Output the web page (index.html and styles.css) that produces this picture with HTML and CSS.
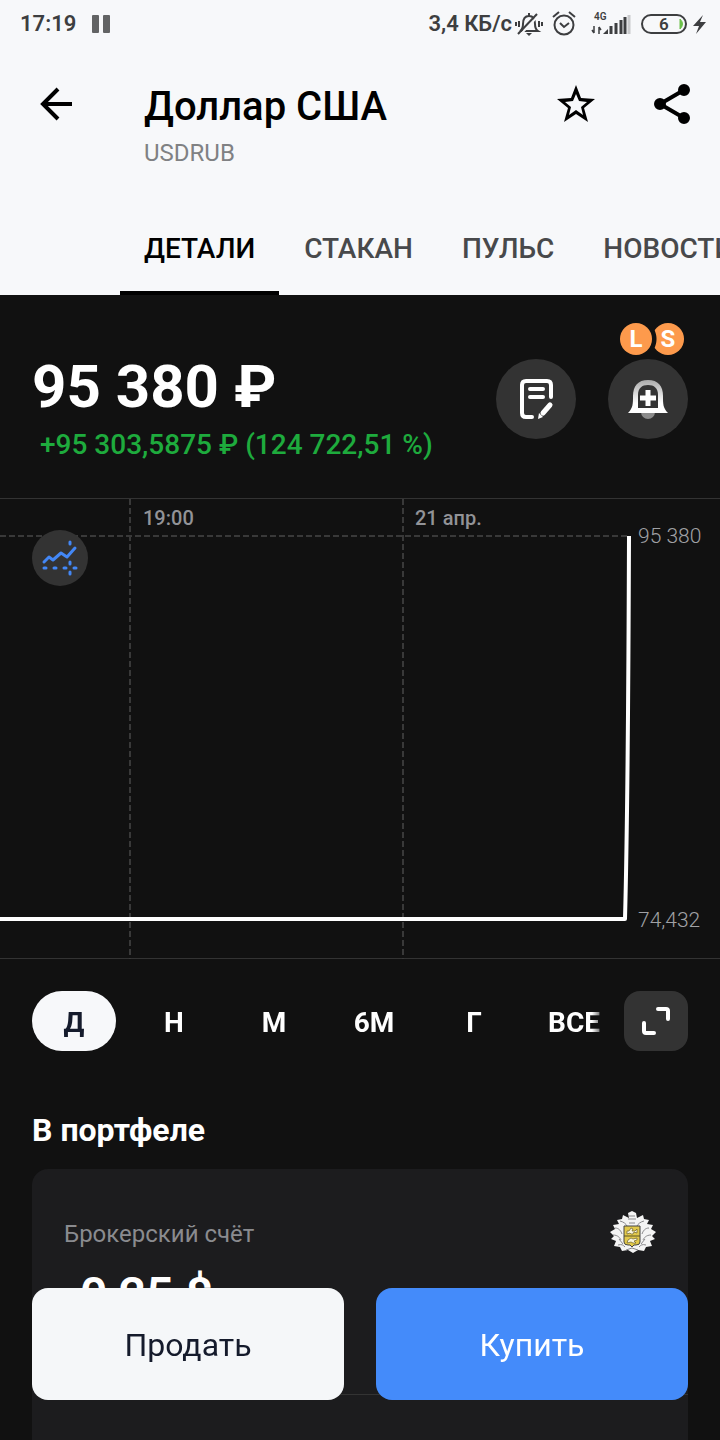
FILE: index.html
```html
<!DOCTYPE html>
<html lang="ru">
  <head>
    <meta charset="UTF-8" />
    <meta name="viewport" content="width=device-width, initial-scale=1.0" />
    <title>Доллар США</title>
    <link rel="stylesheet" href="styles.css">
  </head>
  <body>
    <header class="header">
      <div class="status">
        <span>17:19</span>
        <svg class="pause" width="18" height="18" viewBox="0 0 18 18" fill="#626364">
          <rect width="7" height="18" rx="1" />
          <rect x="11" width="7" height="18" rx="1" />
        </svg>
        <span class="speed">3,4 КБ/с</span>
        <svg class="status-icons" width="192" height="32" viewBox="0 0 192 32" fill="none" stroke="#3d3e40" stroke-width="2">
          <!-- muted bell -->
          <path d="M6 23h18c-3-2-3-4-3-7 0-5-2-8-6-8s-6 3-6 8c0 3 0 5-3 7M15 5v3M5 13v6M2 14v4M25 13v6M28 14v4" />
          <path d="M12 25h6l-3 3z" fill="#3d3e40" stroke="none" />
          <path d="M6 27 25 7" stroke="#f7f8fa" />
          <path d="M4 26 23 6" />
          <!-- alarm -->
          <circle cx="50" cy="17" r="9.5" />
          <path d="m46 15 4 4 5-4M39 9l6-5M61 9l-6-5" />
          <!-- network -->
          <text class="net" x="80" y="12">4G</text>
          <path d="M80 18v7m-2-3 2 3M85 26v-7m2 3-2-3" stroke-width="1.5" />
          <path d="M89 26h5v-5z" fill="#3d3e40" stroke="none" />
          <path d="M97 26v-8M102 26V15M107 26V12M111 26V9" stroke-width="3" />
          <path d="M115 26V7" stroke="#c9cacc" stroke-width="3" />
          <!-- battery -->
          <rect x="128" y="7" width="44" height="18" rx="9" />
          <path d="M166 11q5 5 0 10z" fill="#6cc04a" stroke="#6cc04a" stroke-width="1" />
          <text class="charge" x="145" y="22">6</text>
          <path d="m189 7-10 11h6l-3 8 10-12h-6l3-7z" fill="#3d3e40" stroke="none" />
        </svg>
      </div>
      <div class="toolbar">
        <button class="icon-btn" aria-label="Назад">
          <svg width="36" height="36" viewBox="0 0 36 36" fill="none" stroke="#000" stroke-width="4">
            <path d="M34 18H5M20 3 5 18l15 15" />
          </svg>
        </button>
        <div class="heading">
          <h1 class="title">Доллар США</h1>
          <div class="ticker">USDRUB</div>
        </div>
        <button class="icon-btn" aria-label="В избранное">
          <svg width="40" height="40" viewBox="0 0 40 40" fill="#000" fill-rule="evenodd">
            <path d="m20 1 5 13 14 1-11 9 4 14-12-8-12 8 4-14L1 15l14-1zM20 10l-3 7-8 1 6 5-2 8 7-5 7 5-2-8 6-5-8-1z" />
          </svg>
        </button>
        <button class="icon-btn share" aria-label="Поделиться">
          <svg width="40" height="40" viewBox="0 0 40 40" stroke="#000" stroke-width="4">
            <path d="M32 6 8 20l24 14" fill="none" />
            <circle cx="32" cy="6" r="4" />
            <circle cx="8" cy="20" r="4" />
            <circle cx="32" cy="34" r="4" />
          </svg>
        </button>
      </div>
      <nav class="tabs">
        <button class="tab active">ДЕТАЛИ</button>
        <button class="tab">СТАКАН</button>
        <button class="tab">ПУЛЬС</button>
        <button class="tab">НОВОСТИ</button>
      </nav>
    </header>

    <main class="main">
      <section class="summary">
        <div class="quote">
          <div class="price">95 380 ₽</div>
          <div class="change">+95 303,5875 ₽ (124 722,51 %)</div>
        </div>
        <button class="round-btn" aria-label="Заявка">
          <svg width="40" height="44" viewBox="0 0 40 44" fill="none" stroke="#fff" stroke-width="4" stroke-linecap="round">
            <path d="M16 40h-6q-4 0-4-4V8q0-4 4-4h21q4 0 4 4v12M14 12h13M14 20h13" />
            <path d="m27 36 7-8" stroke-width="5" />
            <path d="m23 36 4 4-5 2z" fill="#fff" stroke="none" />
          </svg>
        </button>
        <div class="alert">
          <button class="round-btn" aria-label="Уведомление">
            <svg width="40" height="44" viewBox="0 0 40 44">
              <defs>
                <linearGradient id="bell" x2="0" y2="1">
                  <stop stop-color="#aaa" />
                  <stop offset="0.7" stop-color="#fff" />
                </linearGradient>
              </defs>
              <path d="M13 35h14a7 7 0 0 1-14 0" fill="#8c8c8c" />
              <path d="M0 36c5-5 5-9 5-17C5 9 10 3 20 3s15 6 15 16c0 8 0 12 5 17z" fill="url(#bell)" />
              <path d="M10 31V18c0-7 4-10 10-10s10 3 10 10v13z" fill="#333" />
              <path d="M20 13v16M12 21h16" stroke="#fff" stroke-width="5" />
            </svg>
          </button>
          <div class="badges">
            <span class="badge">L</span>
            <span class="badge short">S</span>
          </div>
        </div>
      </section>

      <section class="chart">
        <svg class="plot" viewBox="0 0 720 460">
          <g class="grid">
            <path d="M0 37h628M130 0v460M403 0v460" />
          </g>
          <text class="time" x="143" y="26">19:00</text>
          <text class="time" x="415" y="26">21 апр.</text>
          <text class="value" x="638" y="44">95 380</text>
          <text class="value" x="638" y="428">74,432</text>
          <path class="line" d="M0 420h625q3-110 4-383" />
        </svg>
        <button class="chart-btn" aria-label="Тип графика">
          <svg width="40" height="40" viewBox="0 0 40 40" fill="none" stroke="#4387f5" stroke-width="3" stroke-linecap="round" stroke-linejoin="round">
            <path d="m4 24 5-5 4 3 8-7 6 4 8-9" />
            <path d="M4 30h2M14 30h2M24 30h2M34 30h2M30 24v2M30 34v2M30 4v2" />
          </svg>
        </button>
      </section>

      <section class="periods">
        <div class="period-list">
          <button class="period active">Д</button>
          <button class="period">Н</button>
          <button class="period">М</button>
          <button class="period">6М</button>
          <button class="period">Г</button>
          <button class="period">ВСЕ</button>
        </div>
        <button class="expand" aria-label="На весь экран">
          <svg width="32" height="32" viewBox="0 0 32 32" fill="none" stroke="#fff" stroke-width="4" stroke-linecap="round">
            <path d="M18 4h8q2 0 2 2v8M4 18v8q0 2 2 2h8" />
          </svg>
        </button>
      </section>

      <h2 class="section-title">В портфеле</h2>
      <section class="card">
        <div class="account">
          <div>
            <div class="account-name">Брокерский счёт</div>
            <div class="amount">0,25 $</div>
          </div>
          <svg class="crest" width="48" height="48" viewBox="0 0 48 48">
            <path d="M20 4 24 2l4 2 1 5 6-3 1 4 5 1-2 4 6 1-2 4 5 3-4 4 3 3-5 2 2 5-6 1-2 4-6-1-5 3-5-3-6 1-2-4-6-1 2-5-5-2 3-3-4-4 5-3-2-4 6-1-2-4 5-1 1-4 6 3z" fill="#f4f4f4" />
            <path d="M12 12c4 1 6 3 7 5M36 12c-4 1-6 3-7 5M7 19c4 0 6 3 7 6M41 19c-4 0-6 3-7 6M5 26c5 0 7 3 8 5M43 26c-5 0-7 3-8 5M10 36c4-1 5 0 7 2M38 36c-4-1-5 0-7 2M21 7h6M20 10h8M21 14h6M18 41l6-2 6 2M11 30l4 5M37 30l-4 5" fill="none" stroke="#88888b" />
            <path d="M16 17h16v16q0 3-4 3h-2l-2 2-2-2h-2q-4 0-4-3z" fill="#e2c94b" stroke="#444" />
            <path d="M16 27h16" stroke="#5b5225" />
            <path d="M19 25v-3h2l2-3 2 1-1 2h3l2-2v4l-3-1-1 2h-2l-1-1zM19 34l1-3 3-2 2 1 4-1v2l-3 1 2 2h-3l-2-1z" fill="#faf6dd" stroke="#6b602b" stroke-width="0.7" />
          </svg>
        </div>
        <div class="divider"></div>
      </section>
    </main>

    <div class="actions">
      <button class="action sell">Продать</button>
      <button class="action buy">Купить</button>
    </div>
  </body>
</html>
```
FILE: styles.css
```css
* {
  box-sizing: border-box;
}

html,
body {
  height: 100%;
  margin: 0;
}

body {
  display: flex;
  flex-direction: column;
  overflow: hidden;
  font-family: Roboto, "Noto Sans", sans-serif;
  color: #fff;
  background-color: #111;
}

button {
  padding: 0;
  border: none;
  font: inherit;
  color: inherit;
  background-color: transparent;
  cursor: pointer;
}

svg {
  display: block;
}

.header {
  flex: none;
  color: #000;
  background-color: #f7f8fa;
}

.status {
  display: flex;
  align-items: center;
  height: 48px;
  padding: 0 14px 0 20px;
  font-size: 22px;
  line-height: 28px;
  font-weight: 600;
  color: #3d3e40;
}

.pause {
  margin-left: 16px;
}

.speed {
  margin-left: auto;
}

.status-icons {
  margin-left: 2px;
  overflow: visible;
}

.net {
  font-size: 10px;
  fill: #3d3e40;
  stroke: none;
}

.charge {
  font-size: 17px;
  fill: #3d3e40;
  stroke: none;
}

.toolbar {
  display: flex;
  align-items: flex-start;
  height: 155px;
  padding: 36px 28px 0 38px;
}

.icon-btn {
  display: flex;
  align-items: center;
  height: 40px;
}

.heading {
  flex: 1;
  margin-left: 70px;
}

.title {
  margin: -3px 0 0;
  font-size: 40px;
  line-height: 52px;
  font-weight: 500;
}

.ticker {
  margin-top: 6px;
  font-size: 24px;
  line-height: 28px;
  color: #808183;
}

.share {
  margin-left: 56px;
}

.tabs {
  display: flex;
  gap: 1px;
  height: 92px;
  padding-left: 120px;
  overflow: hidden;
}

.tab {
  flex: none;
  padding: 0 24px;
  border-top: 2px solid transparent;
  border-bottom: 4px solid transparent;
  font-size: 28px;
  font-weight: 500;
  color: #48494b;
}

.tab.active {
  color: #000;
  border-bottom-color: #000;
}

.main {
  display: flex;
  flex: 1;
  flex-direction: column;
  min-height: 0;
}

.summary {
  display: flex;
  gap: 32px;
  flex: none;
  height: 203px;
  padding: 64px 32px 0;
}

.quote {
  flex: 1;
}

.price {
  margin-top: -8px;
  font-size: 60px;
  line-height: 72px;
  font-weight: 700;
}

.change {
  padding: 4px 0 0 8px;
  font-size: 28px;
  line-height: 36px;
  font-weight: 500;
  color: #1eab3d;
}

.round-btn {
  display: flex;
  align-items: center;
  justify-content: center;
  width: 80px;
  height: 80px;
  border-radius: 50%;
  background-color: #333;
}

.alert {
  position: relative;
}

.badges {
  position: absolute;
  top: -36px;
  right: 4px;
  display: flex;
}

.badge {
  width: 32px;
  height: 32px;
  border-radius: 50%;
  font-size: 24px;
  line-height: 33px;
  font-weight: 700;
  text-align: center;
  background-color: #fd9a4c;
}

.badge.short {
  background: radial-gradient(circle at -16px 50%, #111 20px, #fd9a4c 21px);
}

.chart {
  position: relative;
  flex: none;
  border-top: 1px solid #333;
  border-bottom: 1px solid #333;
}

.plot {
  width: 100%;
  height: auto;
  margin-bottom: -1px;
}

.grid {
  fill: none;
  stroke: #393939;
  stroke-width: 2;
  stroke-dasharray: 6 3;
}

.time {
  font-size: 20px;
  font-weight: 500;
  fill: #929397;
}

.value {
  font-size: 21px;
  font-weight: 300;
  fill: #a0a1a5;
}

.line {
  fill: none;
  stroke: #fff;
  stroke-width: 4;
  stroke-linejoin: round;
}

.chart-btn {
  position: absolute;
  top: 31px;
  left: 32px;
  display: flex;
  align-items: center;
  justify-content: center;
  width: 56px;
  height: 56px;
  border-radius: 50%;
  background-color: #333;
}

.periods {
  display: flex;
  gap: 24px;
  flex: none;
  padding: 32px 32px 0;
}

.period-list {
  display: flex;
  flex: 1;
  gap: 16px;
  min-width: 0;
  overflow: hidden;
  mask-image: linear-gradient(to left, rgba(0, 0, 0, 0.4), #000 8px);
}

.period {
  flex: none;
  width: 84px;
  height: 60px;
  padding-top: 2px;
  border-radius: 30px;
  font-size: 28px;
  font-weight: 700;
}

.period.active {
  color: #151b2c;
  background-color: #f7f8fa;
}

.expand {
  display: flex;
  align-items: center;
  justify-content: center;
  width: 64px;
  height: 60px;
  border-radius: 16px;
  background-color: #333;
}

.section-title {
  margin: 58px 32px 18px;
  font-size: 32px;
  line-height: 42px;
  font-weight: 700;
}

.card {
  flex: 1;
  min-height: 0;
  margin: 0 32px;
  border-radius: 16px 16px 0 0;
  background-color: #1c1c1e;
}

.account {
  display: flex;
  justify-content: space-between;
  height: 225px;
  padding: 40px 32px 0;
}

.account-name {
  margin-top: 10px;
  font-size: 24px;
  line-height: 30px;
  color: #8a8b8f;
}

.amount {
  padding: 18px 0 0 16px;
  font-size: 48px;
  line-height: 56px;
  font-weight: 600;
}

.divider {
  margin-left: 32px;
  border-top: 1px solid #333;
}

.actions {
  position: fixed;
  right: 32px;
  bottom: 40px;
  left: 32px;
  display: flex;
  gap: 32px;
}

.action {
  flex: 1;
  height: 112px;
  padding-top: 2px;
  border-radius: 16px;
  font-size: 32px;
}

.sell {
  color: #151b2c;
  background-color: #f5f7f9;
}

.buy {
  background-color: #448bfa;
}
```
